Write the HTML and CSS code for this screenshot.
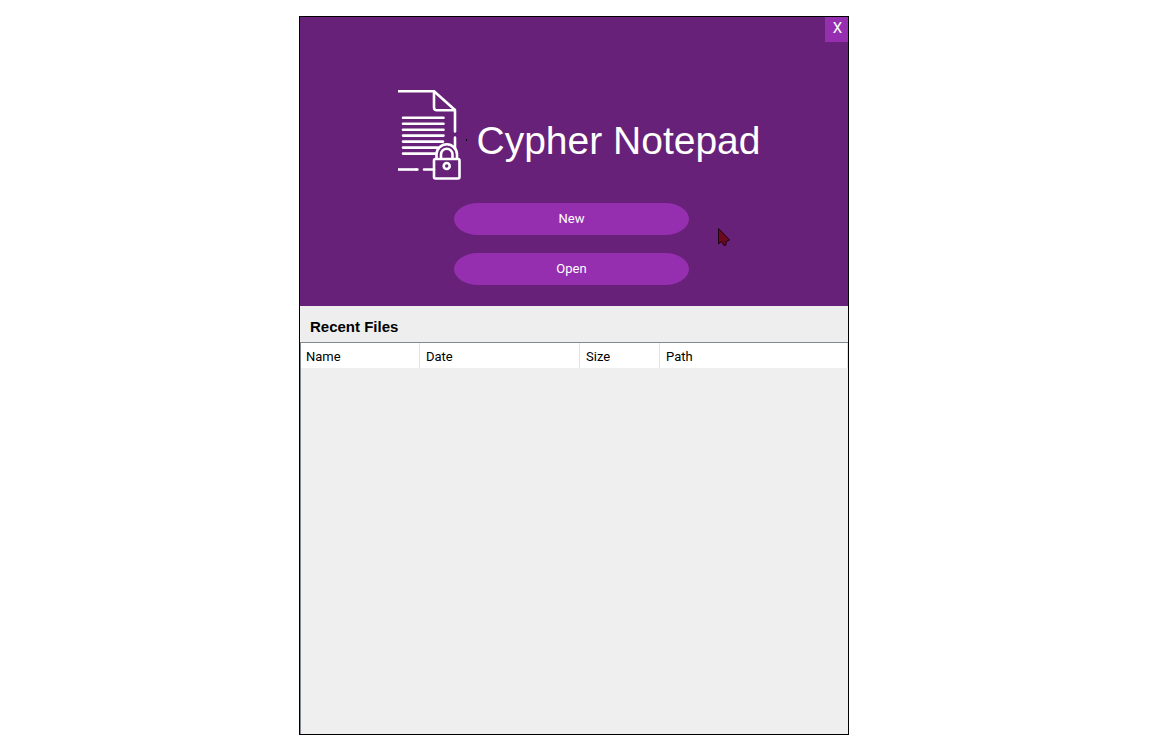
FILE: index.html
```html
<!DOCTYPE html>
<html lang="en">
<head>
<meta charset="utf-8">
<title>Cypher Notepad</title>
<link rel="stylesheet" href="styles.css">
</head>
<body>
<main class="window">
  <header class="hero">
    <button class="close" type="button" aria-label="Close">X</button>
    <div class="brand">
      <svg class="logo" width="70" height="92" viewBox="0 0 70 92" aria-hidden="true">
        <g fill="none" stroke="#fff" stroke-width="2.6" stroke-linecap="round" stroke-linejoin="round">
          <path stroke-linecap="butt" d="M0 2.3H36L57 21"/>
          <path d="M57 21V42.500M57 48.500V60M36 2.500V18.500Q36 21.300 39 21.300H57"/>
          <path d="M5 28.700H45.500M5 34.700H45.500M5 40.700H45.500M5 46.600H45.500M5 52.600H45M5 58.600H39.500M5 64.600H37.500"/>
          <path stroke-linecap="butt" d="M0 80.500H19"/>
          <path d="M18 80.500H19.500M26 80.500H36"/>
          <path d="M38.500 69V65.500A10.200 10.200 0 0 1 59 65.500V69M43 69V65.500A5.700 5.700 0 0 1 54.500 65.500V69"/>
          <rect x="36" y="70" width="25.500" height="19.500" rx="1.500"/>
          <circle cx="48.700" cy="77" r="3"/>
        </g>
        <path fill="#000" d="M68 50h1v2h-1z"/>
      </svg>
      <h1 class="title">Cypher Notepad</h1>
    </div>
    <div class="actions">
      <button class="action" type="button">New</button>
      <button class="action" type="button">Open</button>
    </div>
    <svg class="pointer" width="14" height="20" viewBox="0 0 14 20" aria-hidden="true">
      <path d="M1.500 1.500V17L4.500 14.500L7 18.500L9 18V14.500L12.500 13Z" fill="#6b0a1c" stroke="#1c0410"/>
    </svg>
  </header>
  <section class="recent">
    <h2 class="heading">Recent Files</h2>
    <div class="list">
      <table class="files">
        <thead>
          <tr>
            <th class="name" scope="col">Name</th>
            <th class="date" scope="col">Date</th>
            <th class="size" scope="col">Size</th>
            <th scope="col">Path</th>
          </tr>
        </thead>
      </table>
    </div>
  </section>
</main>
</body>
</html>
```
FILE: styles.css
```css
* {
  box-sizing: border-box;
}

body {
  margin: 0;
  min-height: 100vh;
  padding: 16px 8px 21px 0;
  display: flex;
  justify-content: center;
  background: #fff;
  font-family: Roboto, "Liberation Sans", sans-serif;
  font-size: 13px;
  color: #000;
}

.window {
  width: 100%;
  max-width: 550px;
  display: flex;
  flex-direction: column;
  border: 1px solid #000;
  background: #efefef;
}

.hero {
  position: relative;
  display: flex;
  flex-direction: column;
  align-items: center;
  padding-bottom: 21px;
  background: #672178;
}

.close,
.action {
  border: 0;
  padding: 0;
  background: #952fb0;
  color: #fff;
  font-family: inherit;
}

.close {
  align-self: flex-end;
  width: 23px;
  height: 25px;
  padding: 0 0 3px 2px;
  font-size: 15px;
}

.brand {
  display: flex;
  align-items: center;
  gap: 8px;
  margin-top: 47px;
  padding-left: 11px;
}

.logo {
  flex: none;
}

.title {
  margin: 0;
  padding-top: 12px;
  font: 39px/48px "Liberation Sans", Arial, sans-serif;
  color: #fff;
}

.actions {
  display: flex;
  flex-direction: column;
  align-items: center;
  gap: 18px;
  width: 100%;
  margin-top: 22px;
  padding-right: 5px;
}

.action {
  width: 235px;
  height: 32px;
  padding-bottom: 2px;
  border-radius: 24px / 16px;
  font-size: 13px;
}

.pointer {
  position: absolute;
  left: 417px;
  top: 210px;
}

.recent {
  flex: 1;
  display: flex;
  flex-direction: column;
}

.heading {
  margin: 0;
  padding: 13px 10px 7px;
  background: #eee;
  font: bold 15px/16px "Liberation Sans", Arial, sans-serif;
}

.list {
  flex: 1;
  border-top: 1px solid #828790;
  border-left: 1px solid #828790;
}

.files {
  width: 100%;
  table-layout: fixed;
  border-collapse: separate;
  border-spacing: 0;
  background: #fff;
}

.files th {
  height: 25px;
  padding: 1px 5px 0;
  border-right: 1px solid #e2e2e2;
  text-align: left;
  font-weight: 400;
}

.files th + th {
  padding-left: 6px;
}

.name {
  width: 119px;
}

.date {
  width: 160px;
}

.size {
  width: 80px;
}
```
